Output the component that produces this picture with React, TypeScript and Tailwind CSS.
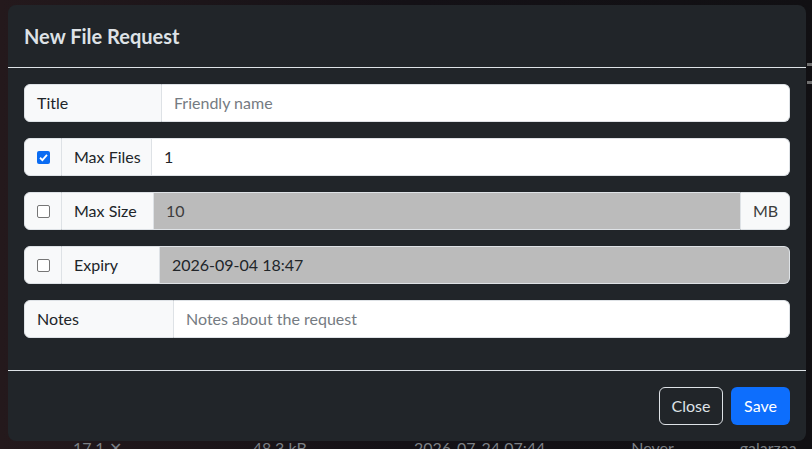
import React from "react";

const font = { fontFamily: 'Lato, "Noto Sans", sans-serif' };

const Check = ({ checked }: { checked?: boolean }) => (
  <div className="flex w-[38px] shrink-0 items-center justify-center border border-[#dee2e6] bg-[#f8f9fa] rounded-l-[6px]">
    {checked ? (
      <span className="flex h-[13px] w-[13px] items-center justify-center rounded-[2px] bg-[#0b6cf2]">
        <svg viewBox="0 0 12 12" className="h-[11px] w-[11px]">
          <path d="M2.2 6.3 L4.8 8.8 L9.8 3.2" fill="none" stroke="#fff" strokeWidth="2" />
        </svg>
      </span>
    ) : (
      <span className="h-[13px] w-[13px] rounded-[2px] border border-[#767676] bg-white" />
    )}
  </div>
);

const App = () => {
  return (
    <div
      className="relative h-[449px] w-[812px] overflow-hidden bg-linear-to-r from-[#24191c] via-[#141116] to-[#111013]"
      style={font}
    >
      {/* page behind the backdrop */}
      <div className="absolute left-0 top-[436px] flex h-6 w-full items-center whitespace-nowrap text-[16px] text-[#7b7f84]">
        <span className="ml-[73px]">17.1 ✕</span>
        <span className="ml-[131px]">48.3 kB</span>
        <span className="ml-[107px]">2026-07-24 07:44</span>
        <span className="ml-[86px]">Never</span>
        <span className="ml-[66px]">galarzaa</span>
      </div>
      <div className="absolute right-0 top-[63px] h-[3px] w-[5px] bg-[#6f6f6f]" />
      <div className="absolute right-0 top-[81px] h-[3px] w-[5px] bg-[#6f6f6f]" />

      <div className="relative ml-[8px] mt-[5px] w-[798px] rounded-lg bg-[#212529] text-[16px]">
        <div className="flex h-[63px] items-center border-b border-[#dee2e6] px-4">
          <h5 className="text-[20px] font-bold leading-[30px] text-[#dee2e6]">New File Request</h5>
        </div>

        <div className="flex flex-col gap-4 px-4 pb-8 pt-4 whitespace-nowrap">
          <div className="flex h-[38px]">
            <div className="flex w-[138px] items-center rounded-l-[6px] border border-[#dee2e6] bg-[#f8f9fa] px-3 text-[#212529]">
              Title
            </div>
            <div className="flex flex-1 items-center rounded-r-[6px] border border-l-0 border-[#dee2e6] bg-white px-3 text-[#757b82]">
              Friendly name
            </div>
          </div>

          <div className="flex h-[38px]">
            <Check checked />
            <div className="flex w-[90px] items-center border border-l-0 border-[#dee2e6] bg-[#f8f9fa] px-3 text-[#212529]">
              Max Files
            </div>
            <div className="flex flex-1 items-center rounded-r-[6px] border border-l-0 border-[#dee2e6] bg-white px-3 text-[#212529]">
              1
            </div>
          </div>

          <div className="flex h-[38px]">
            <Check />
            <div className="flex w-[92px] items-center border border-l-0 border-[#dee2e6] bg-[#f8f9fa] px-3 text-[#212529]">
              Max Size
            </div>
            <div className="flex flex-1 items-center border-y border-[#dee2e6] bg-[#bbbbbb] px-3 text-[#3d3d3d]">
              10
            </div>
            <div className="flex w-[50px] items-center rounded-r-[6px] border border-[#dee2e6] bg-[#f8f9fa] px-3 text-[#3d3d3d]">
              MB
            </div>
          </div>

          <div className="flex h-[38px]">
            <Check />
            <div className="flex w-[98px] items-center border border-l-0 border-[#dee2e6] bg-[#f8f9fa] px-3 text-[#212529]">
              Expiry
            </div>
            <div className="flex flex-1 items-center rounded-r-[6px] border border-l-0 border-[#dee2e6] bg-[#bbbbbb] px-3 text-[#212529]">
              2026-09-04 18:47
            </div>
          </div>

          <div className="flex h-[38px]">
            <div className="flex w-[150px] items-center rounded-l-[6px] border border-[#dee2e6] bg-[#f8f9fa] px-3 text-[#212529]">
              Notes
            </div>
            <div className="flex flex-1 items-center rounded-r-[6px] border border-l-0 border-[#dee2e6] bg-white px-3 text-[#757b82]">
              Notes about the request
            </div>
          </div>
        </div>

        <div className="flex justify-end gap-2 border-t border-[#dee2e6] px-4 py-4">
          <button className="h-[38px] w-[64px] rounded-[6px] border border-[#dee2e6] text-[#dee2e6]">Close</button>
          <button className="h-[38px] w-[59px] rounded-[6px] bg-[#0d6efd] text-white">Save</button>
        </div>
      </div>
    </div>
  );
};

export default App;
